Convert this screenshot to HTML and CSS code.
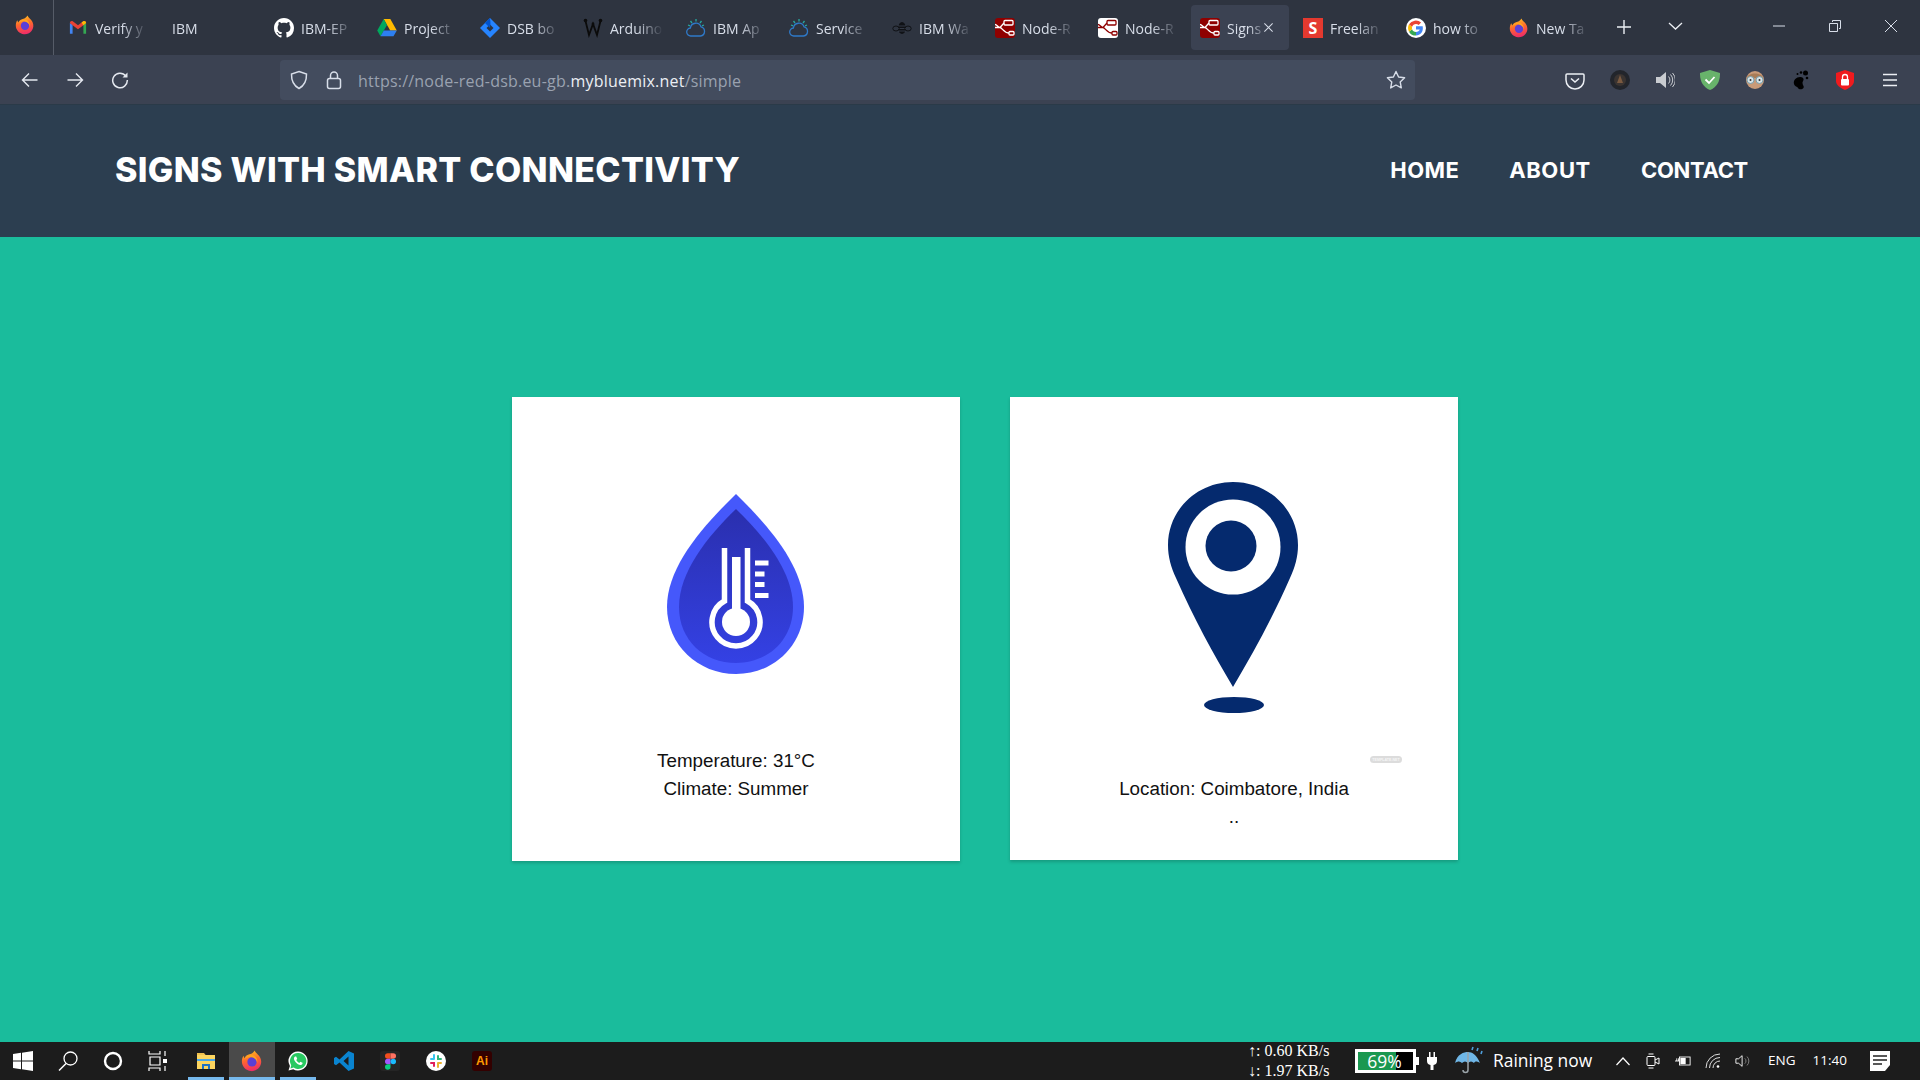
FILE: index.html
```html
<!DOCTYPE html>
<html lang="en">
<head>
<meta charset="utf-8">
<title>Signs with smart connectivity</title>
<link rel="stylesheet" href="styles.css">
</head>
<body>
<svg class="defs" width="0" height="0" aria-hidden="true">
  <defs>
    <linearGradient id="ffg" x1="0.3" y1="0" x2="0.5" y2="1"><stop offset="0" stop-color="#ffc21f"/><stop offset=".45" stop-color="#ff6a2c"/><stop offset="1" stop-color="#ee2a6a"/></linearGradient>
    <linearGradient id="dropg" x1="0" y1="0" x2="0" y2="1"><stop offset="0" stop-color="#2a2fae"/><stop offset="1" stop-color="#3441e4"/></linearGradient>
    <symbol id="firefox" viewBox="0 0 20 20">
      <path d="M12.500.5c.6 2.400 3.600 3.600 5 6.500 1.500 3.200 1 6.500-1 9-2 2.300-4.800 3.500-7.500 3.200C4.500 18.800.8 15 .8 10.500c0-2 .6-3.800 1.500-5.200.2 1 .6 1.700 1.100 2.100.4-1.400 1.500-2.400 3-3 1.500-.5 4.300-.9 6.100-3.900z" fill="url(#ffg)"/>
      <circle cx="10" cy="10.800" r="4.200" fill="#5b3fd6"/>
      <path d="M3.500 8c2-1.500 4.500-2 6.500-1.500 2.500.5 4.500 2.600 4.700 5.200.6-2.800-.8-5.700-3.500-7C8.500 3.800 5 5 3.500 8z" fill="#ffa51f"/>
    </symbol>
    <symbol id="gmail" viewBox="0 0 20 16">
      <path d="M1 15V3l3 2v10z" fill="#4285f4"/><path d="M16 15V5l3-2v12z" fill="#34a853"/>
      <path d="M1 3c0-2 2-2.800 3.500-1.700L10 5.400l5.500-4.100C17 .2 19 1 19 3l-3 2.500-6 4.500-6-4.500z" fill="#ea4335"/>
      <path d="M16 5.500 19 3c0-2-2-2.800-3.500-1.700L14 2.500z" fill="#fbbc04"/>
    </symbol>
    <symbol id="github" viewBox="0 0 16 16">
      <path fill="#fff" d="M8 0C3.580 0 0 3.580 0 8c0 3.540 2.290 6.530 5.470 7.590.4.070.55-.17.55-.38 0-.19-.010-.82-.010-1.490-2.010.37-2.530-.49-2.690-.94-.09-.23-.48-.94-.82-1.130-.28-.15-.68-.52-.010-.53.63-.010 1.080.58 1.230.82.72 1.210 1.870.87 2.330.66.070-.52.28-.87.51-1.070-1.780-.2-3.640-.89-3.640-3.950 0-.87.31-1.590.82-2.150-.08-.2-.36-1.020.08-2.120 0 0 .67-.21 2.200.82.64-.18 1.320-.27 2-.27s1.360.09 2 .27c1.530-1.040 2.200-.82 2.200-.82.44 1.100.16 1.920.08 2.120.51.56.82 1.270.82 2.150 0 3.070-1.870 3.750-3.650 3.950.29.250.54.730.54 1.480 0 1.070-.010 1.930-.010 2.200 0 .21.150.46.550.38A8.010 8.010 0 0 0 16 8c0-4.420-3.580-8-8-8z"/>
    </symbol>
    <symbol id="drive" viewBox="0 0 20 18">
      <path d="M6.700 0h6.600l6.500 11.500h-6.600z" fill="#ffba00"/><path d="M6.700 0 .2 11.500l3.300 5.800L10 6z" fill="#00a85d"/><path d="M3.500 17.300h13l3.300-5.800H6.800z" fill="#2d7ff0"/>
    </symbol>
    <symbol id="jira" viewBox="0 0 20 20">
      <path d="M10 0 20 10l-10 10L0 10z" fill="#2684ff"/><path d="M10 6.500 13.500 10 10 13.500 6.500 10z" fill="#2e3440"/><path d="M10 0 5 5l5 5 .5-5z" fill="#0052cc"/>
    </symbol>
    <symbol id="wok" viewBox="0 0 20 20">
      <path d="M2.500 3 6 17 10 6l4 11 3.500-14" fill="none" stroke="#0b0b0b" stroke-width="1.800"/><circle cx="2.500" cy="2.500" r="1.800" fill="#0b0b0b"/><circle cx="17.500" cy="2.500" r="1.800" fill="#0b0b0b"/><circle cx="10" cy="6" r="1.400" fill="#0b0b0b"/>
    </symbol>
    <symbol id="cloud" viewBox="0 0 20 20">
      <path d="M5 18a4 4 0 0 1-.6-8A5.500 5.500 0 0 1 15 8.800 4.700 4.700 0 0 1 14.500 18z" fill="none" stroke="#2f79c8" stroke-width="1.300"/>
      <path d="M10 1v2.500M4.500 3 6 5M15.500 3 14 5M2 7l2 .8M18 7l-2 .8" stroke="#26a8a0" stroke-width="1.300"/>
    </symbol>
    <symbol id="bee" viewBox="0 0 20 14">
      <ellipse cx="10" cy="7" rx="3.800" ry="6" fill="#101216"/><path d="M6 5h8M6 7.500h8M6 10h8" stroke="#3b4252" stroke-width=".8"/>
      <ellipse cx="4" cy="7.500" rx="3.200" ry="2.500" fill="none" stroke="#101216"/><ellipse cx="16" cy="7.500" rx="3.200" ry="2.500" fill="none" stroke="#101216"/>
    </symbol>
    <symbol id="nodered" viewBox="0 0 20 20">
      <path d="M0 6.500C2 6.500 3 9.500 5 9.500L9 5M5 9.500H0M5 9.500C7 9.500 9 15 14 15" fill="none" stroke="currentColor" stroke-width="1.300"/>
      <rect x="9" y="2.500" width="9" height="4.500" rx="1" fill="none" stroke="currentColor" stroke-width="1.300"/>
      <rect x="14" y="13.500" width="5" height="3.500" rx="1" fill="none" stroke="currentColor" stroke-width="1.300"/>
    </symbol>
    <symbol id="google" viewBox="0 0 20 20">
      <circle cx="10" cy="10" r="10" fill="#fff"/>
      <path d="M16.700 8.300H10v3.300h3.800c-.5 1.500-2 2.500-3.800 2.500v3.300c4.300 0 7.600-3 6.700-9.100z" fill="#4285f4"/>
      <path d="M10 14.100c-1.900 0-3.400-1.100-3.900-2.800L3 13.700c1.300 2.500 3.900 3.900 7 3.900z" fill="#34a853"/>
      <path d="M6.100 11.300a4.400 4.400 0 0 1 0-2.600L3 6.300a8 8 0 0 0 0 7.400z" fill="#fbbc04"/>
      <path d="M10 5.900c1 0 2 .4 2.700 1.100l2.400-2.400A8 8 0 0 0 3 6.300l3.100 2.400C6.600 7 8.100 5.900 10 5.900z" fill="#ea4335"/>
    </symbol>
  </defs>
</svg>

<div class="browser">
  <header class="tabbar">
    <div class="menu-cell"><svg class="ic20"><use href="#firefox"/></svg></div>
    <div class="tabs">
      <div class="tab"><svg class="ic18"><use href="#gmail"/></svg><span class="tab-label">Verify y</span></div>
      <div class="tab tab-plain"><span class="tab-label">IBM</span></div>
      <div class="tab"><svg class="ic20"><use href="#github"/></svg><span class="tab-label">IBM-EP</span></div>
      <div class="tab"><svg class="ic20"><use href="#drive"/></svg><span class="tab-label">Project</span></div>
      <div class="tab"><svg class="ic20"><use href="#jira"/></svg><span class="tab-label">DSB bo</span></div>
      <div class="tab"><svg class="ic20"><use href="#wok"/></svg><span class="tab-label">Arduino</span></div>
      <div class="tab"><svg class="ic20"><use href="#cloud"/></svg><span class="tab-label">IBM Ap</span></div>
      <div class="tab"><svg class="ic20"><use href="#cloud"/></svg><span class="tab-label">Service</span></div>
      <div class="tab"><svg class="ic20"><use href="#bee"/></svg><span class="tab-label">IBM Wa</span></div>
      <div class="tab"><span class="nr nr-red"><svg class="ic20"><use href="#nodered"/></svg></span><span class="tab-label">Node-R</span></div>
      <div class="tab"><span class="nr nr-white"><svg class="ic20"><use href="#nodered"/></svg></span><span class="tab-label">Node-R</span></div>
      <div class="tab tab-active"><span class="nr nr-red"><svg class="ic20"><use href="#nodered"/></svg></span><span class="tab-label">Signs</span>
        <svg class="tab-x" viewBox="0 0 12 12"><path d="M1.500 1.500l9 9M10.500 1.500l-9 9" stroke="#d8dee9" stroke-width="1.100"/></svg></div>
      <div class="tab"><span class="fl">S</span><span class="tab-label">Freelan</span></div>
      <div class="tab"><svg class="ic20"><use href="#google"/></svg><span class="tab-label">how to</span></div>
      <div class="tab"><svg class="ic20"><use href="#firefox"/></svg><span class="tab-label">New Ta</span></div>
    </div>
    <svg class="strip-btn strip-plus" viewBox="0 0 16 16"><path d="M8 1v14M1 8h14" stroke="#eceff4" stroke-width="1.400"/></svg>
    <svg class="strip-btn strip-chev" viewBox="0 0 16 16"><path d="M1.500 5 8 11l6.500-6" fill="none" stroke="#eceff4" stroke-width="1.300"/></svg>
    <div class="win-ctrls">
      <svg class="win-btn" viewBox="0 0 14 14"><path d="M1 7h12" stroke="#d8dee9"/></svg>
      <svg class="win-btn" viewBox="0 0 14 14"><path d="M4.500 3V1.500h8v8H11M1.500 4.500h8v8h-8z" fill="none" stroke="#d8dee9"/></svg>
      <svg class="win-btn" viewBox="0 0 14 14"><path d="M1 1l12 12M13 1 1 13" stroke="#d8dee9"/></svg>
    </div>
  </header>

  <div class="toolbar">
    <div class="nav-btns">
      <svg class="tool-ic" viewBox="0 0 18 18"><path d="M16.500 9h-15M8 2.500 1.500 9 8 15.500" fill="none" stroke="#e5e9f0" stroke-width="1.400"/></svg>
      <svg class="tool-ic" viewBox="0 0 18 18"><path d="M1.500 9h15M10 2.500 16.500 9 10 15.500" fill="none" stroke="#e5e9f0" stroke-width="1.400"/></svg>
      <svg class="tool-ic" viewBox="0 0 18 18"><path d="M14.800 5A7.300 7.300 0 1 0 16.300 9" fill="none" stroke="#e5e9f0" stroke-width="1.500"/><path d="M16.500 1.500v5h-5z" fill="#e5e9f0"/></svg>
    </div>
    <div class="urlbar">
      <svg class="url-ic" viewBox="0 0 20 20"><path d="M10 1.500 17.500 4c.2 7-2 11.500-7.500 14.500C4.500 15.500 2.300 11 2.500 4z" fill="none" stroke="#d8dee9" stroke-width="1.500"/></svg>
      <svg class="url-ic" viewBox="0 0 20 20"><rect x="3.500" y="8.500" width="13" height="10" rx="2" fill="none" stroke="#d8dee9" stroke-width="1.500"/><path d="M6.500 8.500V5.500a3.500 3.500 0 0 1 7 0v3" fill="none" stroke="#d8dee9" stroke-width="1.500"/></svg>
      <span class="url"><span>https://node-red-dsb.eu-gb.</span><b>mybluemix.net</b><span>/simple</span></span>
      <svg class="url-star" viewBox="0 0 20 20"><path d="M10 1.500l2.600 5.500 6 .8-4.400 4.100 1.100 6L10 15l-5.300 2.900 1.100-6-4.400-4.100 6-.8z" fill="none" stroke="#d8dee9" stroke-width="1.400" stroke-linejoin="round"/></svg>
    </div>
    <div class="ext-icons">
      <svg class="ext" viewBox="0 0 20 20"><path d="M2 4h16a1 1 0 0 1 1 1v5a9 9 0 0 1-18 0V5a1 1 0 0 1 1-1z" fill="none" stroke="#eceff4" stroke-width="1.500"/><path d="M6 8.500l4 3.500 4-3.500" fill="none" stroke="#eceff4" stroke-width="1.600"/></svg>
      <svg class="ext" viewBox="0 0 20 20"><circle cx="10" cy="10" r="10" fill="#22252b"/><circle cx="10" cy="10" r="6" fill="#3a3431"/><path d="M10 5l3 8H7z" fill="#7b5a40"/></svg>
      <svg class="ext" viewBox="0 0 20 20"><path d="M1 7h4l6-5v16l-6-5H1z" fill="#c9ccd1"/><path d="M13.500 6.500a5 5 0 0 1 0 7M15.500 4.500a8 8 0 0 1 0 11M17.500 3a10 10 0 0 1 0 14" fill="none" stroke="#c9ccd1"/></svg>
      <svg class="ext" viewBox="0 0 20 20"><path d="M10 0 20 3c.2 8-3 14-10 17C3 17-.2 11 0 3z" fill="#68b36b"/><path d="M5.500 9.500 9 13l5.500-6" fill="none" stroke="#fff" stroke-width="1.800"/></svg>
      <svg class="ext" viewBox="0 0 20 20"><circle cx="10" cy="10" r="9" fill="#c99a78"/><path d="M2 8c1-6 15-6 16 0z" fill="#a87c57"/><circle cx="5.500" cy="10" r="3.500" fill="#d8e4e8" stroke="#7aa0ac"/><circle cx="14.500" cy="10" r="3.500" fill="#d8e4e8" stroke="#7aa0ac"/><circle cx="5.500" cy="10" r="1" fill="#333"/><circle cx="14.500" cy="10" r="1" fill="#333"/></svg>
      <svg class="ext" viewBox="0 0 20 20"><path d="M10 7c-3.500 0-7 3-6 7 .6 2.500 3.500 2.500 4 4 .6 1.500 4 2 5.500 0 1-1.500-1-3-1-5 0-2 2-3 .5-5-.7-.8-1.800-1-3-1z" fill="#000"/><circle cx="15.500" cy="3" r="2.500" fill="#000"/><circle cx="11" cy="2.500" r="1.300" fill="#000"/><circle cx="7.500" cy="4" r="1" fill="#000"/><circle cx="17" cy="8" r="1.300" fill="#000"/></svg>
      <svg class="ext" viewBox="0 0 20 20"><path d="M10 0 19 3v8c0 4-4 7-9 9-5-2-9-5-9-9V3z" fill="#f01b1e"/><rect x="6" y="9" width="8" height="6.500" rx="1" fill="#fff"/><path d="M7.500 9V7a2.500 2.500 0 0 1 5 0v2" fill="none" stroke="#fff" stroke-width="1.300"/></svg>
      <svg class="ext" viewBox="0 0 20 20"><path d="M3 4.500h14M3 10h14M3 15.500h14" stroke="#eceff4" stroke-width="1.500"/></svg>
    </div>
  </div>

  <nav class="sitenav">
    <h1 class="brand">SIGNS WITH SMART CONNECTIVITY</h1>
    <ul class="navlinks">
      <li>HOME</li>
      <li class="link-about">ABOUT</li>
      <li class="link-contact">CONTACT</li>
    </ul>
  </nav>

  <main class="stage">
    <section class="card card-temp">
      <svg class="art art-temp" viewBox="0 0 448 349">
        <path d="M224 97C190 130 155 170 155 210 155 248 186 277 224 277 262 277 292 248 292 210 292 170 258 130 224 97Z" fill="#4558fb"/>
        <path d="M224 112C195 140 167 175 167 210 167 243 192 266 224 266 256 266 281 243 281 210 281 175 253 140 224 112Z" fill="url(#dropg)"/>
        <path d="M212.500 151V204A24 24 0 1 0 235.500 204V151" fill="none" stroke="#fff" stroke-width="5.500"/>
        <rect x="220" y="160" width="8.500" height="56" fill="#fff"/>
        <circle cx="224" cy="225" r="14" fill="#fff"/>
        <path d="M243 166h13.500M243 177h9.500M243 187.500h9.500M243 198.500h13.500" stroke="#fff" stroke-width="5"/>
      </svg>
      <p class="card-text">Temperature: 31°C</p>
      <p class="card-text">Climate: Summer</p>
    </section>
    <section class="card card-loc">
      <svg class="art art-loc" viewBox="0 0 448 377">
        <path d="M223 85C187 85 158 113 158 148 158 160 161 170 166 181 184 222 203 256 223 290 243 256 262 222 280 181 285 170 288 160 288 148 288 113 259 85 223 85Z" fill="#052a6e"/>
        <circle cx="223" cy="150" r="47.500" fill="#fff"/>
        <circle cx="221" cy="149" r="25.500" fill="#052a6e"/>
        <ellipse cx="224" cy="308" rx="30" ry="8" fill="#052a6e"/>
        <rect x="360" y="359" width="32" height="7" rx="3.500" fill="#dcdcdc"/>
        <text x="376" y="364" class="wm">TEMPLATE.NET</text>
      </svg>
      <p class="card-text">Location: Coimbatore, India</p>
      <p class="card-text">..</p>
    </section>
  </main>

  <footer class="taskbar">
    <div class="task-sys">
      <div class="task-cell"><svg class="task-ic" viewBox="0 0 20 20"><path d="M0 3l8-1.200V9.500H0zM9 1.700 20 0v9.500H9zM0 10.500h8v7.700L0 17zM9 10.500h11V20L9 18.300z" fill="#fff"/></svg></div>
      <div class="task-cell"><svg class="task-ic" viewBox="0 0 20 20"><circle cx="12.500" cy="7.500" r="6.500" fill="none" stroke="#fff" stroke-width="1.300"/><path d="M8 12.500 1 19.500" stroke="#fff" stroke-width="1.500"/></svg></div>
      <div class="task-cell"><svg class="task-ic" viewBox="0 0 20 20"><circle cx="10" cy="10" r="8" fill="none" stroke="#fff" stroke-width="2.400"/></svg></div>
      <div class="task-cell"><svg class="task-ic" viewBox="0 0 20 20"><path d="M1 0v3h11V0M1 20v-3h11v3M2 6h10v8H2zM17 0v5M17 15v5" fill="none" stroke="#fff" stroke-width="1.200"/><rect x="15" y="8" width="4" height="4" fill="#fff"/></svg></div>
    </div>
    <div class="task-apps">
      <div class="task-app task-open"><svg class="task-ic" viewBox="0 0 20 20"><path d="M1 2h7l2 2.500H1z" fill="#f0c04e"/><path d="M1 4h18v14H1z" fill="#fcd55f"/><path d="M1 8h18v2H1z" fill="#4aa5e8"/><path d="M6 18v-5h8v5h-2v-3H8v3z" fill="#1f72c4"/></svg></div>
      <div class="task-app task-active"><svg class="task-ff"><use href="#firefox"/></svg></div>
      <div class="task-app task-open"><svg class="task-ic" viewBox="0 0 20 20"><path d="M10 .5a9.500 9.500 0 0 0-8.100 14.400L.5 19.500l4.800-1.300A9.500 9.500 0 1 0 10 .5z" fill="#fff"/><path d="M10 2a8 8 0 0 0-6.800 12.200l-.8 3.200 3.300-.9A8 8 0 1 0 10 2z" fill="#29c961"/><path d="M7 5.500c-1.500 1-1.500 3 .5 5.500s4.500 3.500 6 2.700c1-.6 1.200-1.700 1-2l-2.200-1-1 1.200c-1-.3-2.500-1.800-3-3l.9-1.100-1-2.200z" fill="#fff"/></svg></div>
      <div class="task-app"><svg class="task-ic" viewBox="0 0 20 20"><path d="M14.500 0 20 2.500v15L14.500 20 5.500 11.500 2 14.300 0 13V7l2-1.300 3.500 2.800zM14.500 5.500 9.500 10l5 4.500z" fill="#0a84d0"/></svg></div>
      <div class="task-app"><span class="icon-tile tile-figma"><svg class="mini-ic" viewBox="0 0 12 18"><path d="M3 0h3v6H3a3 3 0 0 1 0-6z" fill="#f24e1e"/><path d="M6 0h3a3 3 0 0 1 0 6H6z" fill="#ff7262"/><path d="M3 6h3v6H3a3 3 0 0 1 0-6z" fill="#a259ff"/><circle cx="9" cy="9" r="3" fill="#1abcfe"/><path d="M3 12h3v3a3 3 0 1 1-3-3z" fill="#0acf83"/></svg></span></div>
      <div class="task-app"><svg class="task-ic" viewBox="0 0 20 20"><circle cx="10" cy="10" r="10" fill="#fff"/><path d="M8 4v4M5 8h3" stroke="#36c5f0" stroke-width="2" stroke-linecap="round"/><path d="M12 5v3h3" stroke="#2eb67d" stroke-width="2" stroke-linecap="round" fill="none"/><path d="M8 15v-3H5" stroke="#e01e5a" stroke-width="2" stroke-linecap="round" fill="none"/><path d="M12 12h3M12 12v4" stroke="#ecb22e" stroke-width="2" stroke-linecap="round"/></svg></div>
      <div class="task-app"><span class="icon-tile tile-ai">Ai</span></div>
    </div>
    <div class="tray">
      <div class="netspeed"><span>↑: 0.60 KB/s</span><span>↓: 1.97 KB/s</span></div>
      <div class="battery"><div class="battery-fill"></div><span class="battery-text">69%</span></div>
      <svg class="plug" viewBox="0 0 10 18"><path d="M2 0h1.500v5H2zM6.500 0H8v5H6.500zM0 5h10v4a4 4 0 0 1-3.500 4v5h-3v-5A4 4 0 0 1 0 9z" fill="#fff"/></svg>
      <svg class="umbrella" viewBox="0 0 30 30"><path d="M2 17C4 8 11 6 15 6s9 3 12 11c-3-2-5-2-6 0-2-2-4-2-6 0-2-2-4-2-6 0-2-2-4-2-7 0z" fill="#6fb6e6"/><path d="M15 6v18a2.500 2.500 0 0 1-5 0" fill="none" stroke="#9aa3a8" stroke-width="1.500"/><path d="M20 1l-1 3M25 2l-1 3M29 5l-1 3" stroke="#4f9fdc" stroke-width="1.600"/></svg>
      <span class="weather">Raining now</span>
      <svg class="tray-ic tray-chev" viewBox="0 0 16 16"><path d="M1.500 12 8 5l6.500 7" fill="none" stroke="#fff" stroke-width="1.200"/></svg>
      <svg class="tray-ic" viewBox="0 0 16 16"><rect x="2" y="3.500" width="8" height="9" rx="1" fill="none" stroke="#fff"/><path d="M10 7l4-2v6l-4-2M3.500 1h5M3.500 15h5" fill="none" stroke="#fff"/></svg>
      <svg class="tray-ic" viewBox="0 0 18 16"><rect x="5" y="3.500" width="12" height="9" fill="none" stroke="#fff"/><rect x="6" y="4.500" width="6" height="7" fill="#fff"/><path d="M0 8h5M2 5v3M4 5v3" stroke="#fff"/></svg>
      <svg class="tray-ic" viewBox="0 0 16 16"><path d="M1 15A14 14 0 0 1 15 1M4.500 15A10.500 10.500 0 0 1 15 4.500M8 15a7 7 0 0 1 7-7" fill="none" stroke="#ddd"/><circle cx="13" cy="13.500" r="1.300" fill="#fff"/></svg>
      <svg class="tray-ic" viewBox="0 0 18 16"><path d="M1 5.500h3L8 2v12L4 10.500H1z" fill="none" stroke="#fff"/><path d="M11 5a4 4 0 0 1 0 6M13.500 3a7 7 0 0 1 0 10" fill="none" stroke="#888"/></svg>
      <span class="tray-txt tray-eng">ENG</span>
      <span class="tray-txt tray-time">11:40</span>
      <svg class="tray-note" viewBox="0 0 20 20"><path d="M0 0h20v14l-5 6H0z" fill="#fff"/><path d="M3 5h14M3 9h14M3 13h9" stroke="#222" stroke-width="1.300"/></svg>
    </div>
  </footer>
</div>
</body>
</html>
```
FILE: styles.css
```css
* { box-sizing: border-box; }
html, body { margin: 0; padding: 0; height: 100%; overflow: hidden; }
body { font-family: "Open Sans", "Liberation Sans", sans-serif; background: #1abc9c; }
.defs { display: block; height: 0; width: 0; }
.browser { width: 1920px; height: 1080px; display: flex; flex-direction: column; }

/* tab strip */
.tabbar { height: 55px; flex: none; background: #2e3440; display: flex; align-items: center; }
.menu-cell { width: 54px; height: 55px; flex: none; display: flex; align-items: center; justify-content: center; border-right: 1px solid #565c68; padding-bottom: 6px; padding-right: 3px; }
.ic20 { width: 20px; height: 20px; display: block; flex: none; }
.ic18 { width: 18px; height: 15px; display: block; flex: none; margin: 0 1px; }
.tabs { display: flex; margin-left: 5px; height: 46px; align-self: flex-start; margin-top: 5px; }
.tab { width: 98px; margin-right: 5px; height: 45px; flex: none; display: flex; align-items: center; gap: 7px; padding-left: 9px; border-radius: 4px; position: relative; }
.tab-plain { padding-left: 10px; }
.tab-active { background: #3b4252; margin-left: -1px; margin-right: 5px; }
.tab-label { font-size: 14px; color: #d8dee9; white-space: nowrap; width: 53px; padding-top: 1px; -webkit-mask-image: linear-gradient(90deg, #000 50%, transparent 100%); mask-image: linear-gradient(90deg, #000 50%, transparent 100%); }
.tab-active .tab-label { width: 40px; -webkit-mask-image: linear-gradient(90deg, #000 55%, transparent 100%); mask-image: linear-gradient(90deg, #000 55%, transparent 100%); }
.tab-x { position: absolute; right: 15px; top: 17px; width: 11px; height: 11px; }
.nr { width: 20px; height: 20px; flex: none; border-radius: 3px; overflow: hidden; display: block; }
.nr-red { background: #8f0000; color: #fff; }
.nr-white { background: #fff; color: #8f0000; }
.fl { width: 20px; height: 20px; flex: none; background: #e4392f; color: #fff; font: 700 16px/20px "Open Sans", sans-serif; text-align: center; }
.strip-btn { flex: none; width: 16px; height: 16px; margin-bottom: 1px; }
.strip-plus { margin-left: 13px; }
.strip-chev { margin-left: 35px; width: 17px; margin-bottom: 4px; }
.win-ctrls { margin-left: auto; display: flex; gap: 42px; padding-right: 22px; margin-bottom: 3px; }
.win-btn { width: 14px; height: 14px; display: block; }

/* toolbar */
.toolbar { height: 50px; flex: none; background: #3b4252; display: flex; align-items: center; border-bottom: 1px solid #2a3a48; position: relative; }
.nav-btns { display: flex; gap: 27px; padding-left: 21px; width: 280px; flex: none; }
.tool-ic { width: 18px; height: 18px; display: block; }
.urlbar { width: 1135px; height: 40px; flex: none; background: #434c5e; border-radius: 4px; display: flex; align-items: center; padding: 0 9px; gap: 15px; }
.url-ic { width: 20px; height: 20px; display: block; flex: none; }
.url { font-size: 16px; color: #9aa2b0; margin-left: -1px; padding-top: 2px; letter-spacing: .22px; white-space: nowrap; }
.url b { font-weight: 400; color: #eceff4; }
.url-star { width: 20px; height: 20px; margin-left: auto; flex: none; margin-right: 0; }
.ext-icons { display: flex; gap: 25px; margin-left: 150px; }
.ext { width: 20px; height: 20px; display: block; flex: none; }

/* site nav */
.sitenav { height: 132px; flex: none; background: #2c3e50; display: flex; align-items: center; justify-content: space-between; padding: 0 172px 3px 115px; }
.brand { margin: 0; font: 800 34px/1 "Inter", "Liberation Sans", sans-serif; color: #fff; letter-spacing: .32px; }
.navlinks { list-style: none; margin: 0; padding: 0; display: flex; gap: 50px; font: 700 22px/1 "Inter", "Liberation Sans", sans-serif; color: #fff; letter-spacing: .4px; }
.link-about { letter-spacing: .6px; }
.link-contact { letter-spacing: -.3px; }

/* cards */
.stage { flex: 1; background: #1abc9c; display: flex; justify-content: center; align-items: flex-start; gap: 50px; padding-top: 160px; padding-left: 50px; }
.card { width: 448px; background: #fff; box-shadow: 0 2px 3px rgba(0,0,0,.18); }
.card-temp { height: 464px; }
.card-loc { height: 463px; }
.art { width: 448px; display: block; margin-bottom: 1px; }
.art-temp { height: 349px; }
.art-loc { height: 377px; }
.card-text { margin: 0; text-align: center; font: 18.800px/28px "Liberation Sans", Arial, sans-serif; color: #111; }
.wm { font: 700 3.600px "Liberation Sans", sans-serif; fill: #f6f6f6; text-anchor: middle; }

/* taskbar */
.taskbar { height: 38px; flex: none; background: #1c1c1c; display: flex; align-items: stretch; }
.task-sys { display: flex; flex: none; }
.task-cell { width: 45px; display: flex; align-items: center; justify-content: center; }
.task-ic { width: 20px; height: 20px; display: block; flex: none; }
.task-ff { width: 22px; height: 22px; display: block; }
.task-apps { display: flex; margin-left: 3px; flex: none; }
.task-app { width: 46px; display: flex; align-items: center; justify-content: center; position: relative; }
.task-open::after, .task-active::after { content: ""; position: absolute; left: 5px; right: 5px; bottom: 0; height: 3px; background: #76b9ed; }
.task-active { background: #4a4a4a; }
.task-active::after { left: 0; right: 0; }
.icon-tile { width: 20px; height: 20px; border-radius: 3px; display: flex; align-items: center; justify-content: center; }
.tile-figma { background: #252525; }
.mini-ic { width: 11px; height: 17px; display: block; }
.tile-ai { background: #330000; color: #ff9a00; font: 700 12px/1 "Liberation Sans", sans-serif; }
.tray { margin-left: auto; display: flex; align-items: center; color: #fff; padding-right: 30px; }
.netspeed { display: flex; flex-direction: column; font: 16px/20px "Liberation Serif", "DejaVu Serif", serif; width: 107px; }
.netspeed span { white-space: nowrap; }
.battery { width: 61px; height: 24px; border: 3px solid #fff; background: #000; position: relative; flex: none; }
.battery::after { content: ""; position: absolute; right: -6px; top: 5px; width: 3px; height: 8px; background: #fff; }
.battery-fill { width: 69%; height: 100%; background: #1a9850; }
.battery-text { position: absolute; left: 0; right: 2px; top: 0; text-align: center; font: 17.500px/18px "Open Sans", sans-serif; color: #fff; }
.plug { width: 10px; height: 18px; margin-left: 11px; flex: none; }
.umbrella { width: 30px; height: 30px; margin-left: 15.500px; flex: none; }
.weather { font: 17.400px/1 "Open Sans", sans-serif; margin-left: 10.500px; white-space: nowrap; width: 104px; }
.tray-ic { width: 16px; height: 16px; flex: none; margin-left: 14px; }
.tray-chev { margin-left: 18px; }
.tray-txt { font: 13.500px/1 "Open Sans", sans-serif; white-space: nowrap; }
.tray-eng { margin-left: 17px; }
.tray-time { margin-left: 17px; }
.tray-note { width: 20px; height: 20px; margin-left: 23px; flex: none; }
```
